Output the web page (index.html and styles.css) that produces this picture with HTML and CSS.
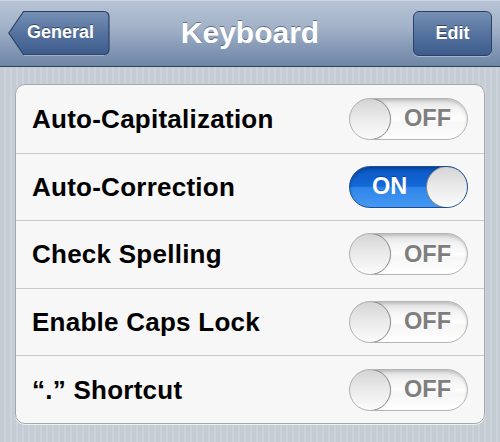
FILE: index.html
```html
<!DOCTYPE html>
<html>
<head>
<meta charset="utf-8">
<link rel="stylesheet" href="styles.css">
</head>
<body>
<div class="screen">
  <header class="navbar">
    <div class="nav-left">
      <button class="back-btn">
        <svg class="back-shape" width="102" height="46" viewBox="0 0 102 46">
          <defs>
            <linearGradient id="bg" x1="0" y1="0" x2="0" y2="1">
              <stop offset="0" stop-color="#7690b4"/>
              <stop offset="0.5" stop-color="#56739f"/>
              <stop offset="1" stop-color="#3d5c8c"/>
            </linearGradient>
          </defs>
          <path d="M0.8,23 L15.5,1.5 H96 a5,5 0 0 1 5,5 V39.5 a5,5 0 0 1 -5,5 H15.5 Z" fill="url(#bg)" stroke="#2c4166" stroke-width="1.2"/>
          <path d="M15.8,45.4 H96" stroke="rgba(255,255,255,0.3)" stroke-width="1"/>
        </svg>
        <span class="back-text">General</span>
      </button>
    </div>
    <h1 class="title">Keyboard</h1>
    <div class="nav-right">
      <button class="edit-btn">Edit</button>
    </div>
  </header>
  <main class="content">
    <section class="card">
      <div class="row"><span class="label">Auto-Capitalization</span><div class="toggle off"><span class="knob"></span><span class="tlabel">OFF</span></div></div>
      <div class="row"><span class="label">Auto-Correction</span><div class="toggle on"><span class="tlabel">ON</span><span class="knob"></span></div></div>
      <div class="row"><span class="label">Check Spelling</span><div class="toggle off"><span class="knob"></span><span class="tlabel">OFF</span></div></div>
      <div class="row"><span class="label">Enable Caps Lock</span><div class="toggle off"><span class="knob"></span><span class="tlabel">OFF</span></div></div>
      <div class="row"><span class="label">“.” Shortcut</span><div class="toggle off"><span class="knob"></span><span class="tlabel">OFF</span></div></div>
    </section>
  </main>
</div>
</body>
</html>
```

FILE: styles.css
```css
* { box-sizing: border-box; }
html, body { margin: 0; padding: 0; }
body {
  width: 500px;
  height: 442px;
  overflow: hidden;
  font-family: "Liberation Sans", Arial, Helvetica, sans-serif;
}
.screen {
  width: 500px;
  height: 442px;
  display: flex;
  flex-direction: column;
  background-color: #c8ced6;
  background-image: repeating-linear-gradient(90deg, #c6ccd4 0, #c6ccd4 4px, #cdd3da 4px, #cdd3da 6px);
}
.navbar {
  height: 67px;
  flex: none;
  display: grid;
  grid-template-columns: 1fr auto 1fr;
  align-items: center;
  padding: 0 8px 1px 8px;
  background: linear-gradient(#b8c4d6 0%, #a3b2c8 40%, #8297b4 75%, #6f86a5 100%);
  border-top: 1px solid #cdd6e3;
  border-bottom: 1px solid #2f3f57;
}
.nav-left { justify-self: start; display: flex; }
.nav-right { justify-self: end; display: flex; }
.title {
  margin: 0;
  font-size: 30px;
  font-weight: bold;
  color: #fff;
  text-shadow: 0 -1px 0 rgba(40, 55, 80, 0.55);
  line-height: 1;
  padding-bottom: 1px;
}
.back-btn {
  display: grid;
  width: 102px;
  height: 46px;
  padding: 0;
  margin: 0;
  border: 0;
  background: none;
  font: inherit;
}
.back-shape, .back-text { grid-area: 1 / 1; }
.back-shape { display: block; }
.back-text {
  align-self: center;
  justify-self: start;
  padding-left: 19px;
  padding-bottom: 1px;
  font-size: 18px;
  font-weight: bold;
  color: #fff;
  text-shadow: 0 -1px 0 rgba(0, 0, 0, 0.45);
}
.edit-btn {
  width: 79px;
  height: 45px;
  margin: 0;
  padding: 0;
  border: 1px solid #2c4166;
  border-radius: 6px;
  background: linear-gradient(#7690b4, #56739f 50%, #3d5c8c);
  box-shadow: 0 1px 0 rgba(255,255,255,0.35);
  font-family: inherit;
  font-size: 18px;
  font-weight: bold;
  color: #fff;
  text-shadow: 0 -1px 0 rgba(0, 0, 0, 0.45);
}
.content {
  padding: 17px 15px 0 15px;
}
.card {
  background: #f7f7f7;
  border: 1px solid #a5a8ad;
  border-radius: 10px;
  box-shadow: 0 1px 0 rgba(255,255,255,0.7);
}
.row {
  height: 67.6px;
  display: flex;
  align-items: center;
  justify-content: space-between;
  padding: 0 16px 0 16px;
}
.row + .row { border-top: 1px solid #c9c9c9; }
.label {
  font-size: 26px;
  font-weight: bold;
  color: #000;
  letter-spacing: 0.25px;
  padding-top: 1px;
}
.toggle {
  width: 119px;
  height: 42px;
  border-radius: 21px;
  display: flex;
  align-items: center;
  overflow: hidden;
}
.toggle.off {
  border: 1px solid #b4b4b4;
  background: linear-gradient(#dedede 0%, #f4f4f4 25%, #fdfdfd 50%, #f6f6f6 60%, #ffffff 100%);
  box-shadow: inset 0 2px 3px rgba(0,0,0,0.15);
}
.toggle.on {
  border: 1px solid #1a4f95;
  background: linear-gradient(#0a56c2 0%, #1469d8 48%, #2f86ea 52%, #4598f2 100%);
  box-shadow: inset 0 2px 3px rgba(0,0,0,0.25);
}
.knob {
  flex: none;
  width: 42px;
  height: 42px;
  margin: -1px;
  border-radius: 50%;
  border: 1px solid #8c8c8c;
  background: linear-gradient(#d4d4d4 0%, #e9e9e9 45%, #fbfbfb 100%);
  box-shadow: 0 0 1px rgba(0,0,0,0.3), inset 0 -1px 1px rgba(255,255,255,0.8);
}
.tlabel {
  flex: 1;
  text-align: center;
  font-size: 23.5px;
  font-weight: bold;
  line-height: 1;
}
.off .tlabel {
  color: #7e7e7e;
  padding-right: 2px;
  text-shadow: 0 1px 0 rgba(255,255,255,0.8);
}
.on .tlabel {
  color: #fff;
  padding-left: 2px;
  text-shadow: 0 -1px 0 rgba(0,0,60,0.3);
}
```
